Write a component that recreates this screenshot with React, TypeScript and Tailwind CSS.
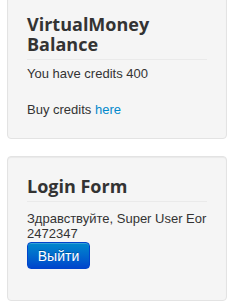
import React from 'react';

const Card: React.FC<{ title: React.ReactNode; className?: string; children: React.ReactNode }> = ({
  title,
  className = '',
  children,
}) => (
  <div
    className={`w-[220px] rounded-[4px] border border-[#e3e3e3] bg-[#f5f5f5] px-[19px] pt-[19px] pb-[19px] shadow-[inset_0_1px_1px_rgba(0,0,0,0.05)] ${className}`}
  >
    <h3 className="border-b border-[#eaeaea] pb-[5px] font-['Open_Sans',sans-serif] text-[18px] font-bold leading-[20px] text-[#333]">
      {title}
    </h3>
    {children}
  </div>
);

export default function App() {
  return (
    <div className="min-h-[306px] bg-white pl-[7px] font-['Liberation_Sans',Arial,sans-serif] text-[13px] leading-[18px] text-[#333]">
      <Card title={<>VirtualMoney<br />Balance</>} className="-mt-[6px]">
        <p className="mt-[5px]">You have credits 400</p>
        <p className="mt-[18px]">
          Buy credits <a href="#" className="text-[#0088cc]">here</a>
        </p>
      </Card>
      <Card title="Login Form" className="mt-[17px]">
        <p className="mt-[9px] leading-[15px]">Здравствуйте, Super User Eor 2472347</p>
        <button
          type="button"
          className="mt-[1px] mb-[12px] h-[27px] w-[63px] rounded-[4px] border border-[#0044cc] bg-gradient-to-b from-[#0088cc] to-[#0044cc] text-[14px] leading-[20px] text-white shadow-[inset_0_1px_0_rgba(255,255,255,0.2)] [text-shadow:0_-1px_0_rgba(0,0,0,0.25)]"
        >
          Выйти
        </button>
      </Card>
    </div>
  );
}
